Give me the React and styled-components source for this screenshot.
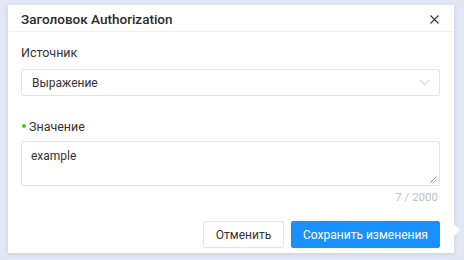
import React from "react";
import styled, { createGlobalStyle } from "styled-components";

const Global = createGlobalStyle`
  html, body { margin: 0; padding: 0; background: #e3e6f3; }
  body { font-family: Roboto, "Liberation Sans", sans-serif; color: #262626; }
  * { box-sizing: border-box; }
`;

const Page = styled.div`
  width: 464px;
  height: 260px;
  padding: 5px 10px 7px 8px;
  display: flex;
`;

const Card = styled.div`
  position: relative;
  flex: 1;
  background: #fff;
  box-shadow: 0 1px 4px rgba(80, 90, 140, 0.18);
  display: flex;
  flex-direction: column;
`;

const Arrow = styled.div`
  position: absolute;
  right: -6px;
  top: 219px;
  width: 0;
  height: 0;
  border-top: 6px solid transparent;
  border-bottom: 6px solid transparent;
  border-left: 6px solid #fff;
`;

const Header = styled.div`
  height: 27px;
  border-bottom: 1px solid #f0f0f0;
  display: flex;
  align-items: center;
  justify-content: space-between;
  padding: 0 15px 0 13px;
`;

const Title = styled.div`
  font-size: 13.5px;
  font-weight: 500;
  color: #2b2b2b;
  margin-top: 1px;
`;

const Close = styled.button`
  border: 0;
  background: none;
  padding: 0;
  width: 9px;
  height: 9px;
  display: flex;
  color: #333;
  margin-top: 2px;
`;

const Body = styled.div`
  padding: 12px 14px 0 13px;
  display: flex;
  flex-direction: column;
`;

const Label = styled.div`
  font-size: 12.5px;
  color: #333;
  height: 16px;
  display: flex;
  align-items: center;
  gap: 3px;
  margin-bottom: ${(p) => p.$mb}px;
`;

const Dot = styled.span`
  width: 4px;
  height: 4px;
  border-radius: 50%;
  background: #52c41a;
  margin-left: 1px;
`;

const Select = styled.div`
  height: 27px;
  border: 1px solid #e4e4e4;
  border-radius: 2px;
  display: flex;
  align-items: center;
  justify-content: space-between;
  padding-left: 10px;
  padding-right: 9px;
  font-size: 12px;
  color: #333;
  margin-bottom: 22px;
`;

const SelectValue = styled.span`
  display: block;
`;

const Textarea = styled.div`
  position: relative;
  height: 45px;
  border: 1px solid #e4e4e4;
  border-radius: 2px;
  padding: 7px 9px 7px 9px;
  font-size: 12px;
  color: #333;
`;

const Grip = styled.svg`
  position: absolute;
  right: 2px;
  bottom: 2px;
`;

const Counter = styled.div`
  text-align: right;
  font-size: 11.5px;
  color: #bfbfbf;
  padding-right: 2px;
  margin-top: 4px;
  height: 15px;
`;

const Footer = styled.div`
  display: flex;
  justify-content: flex-end;
  gap: 7px;
  margin-top: 16px;
`;

const Button = styled.button`
  height: 27px;
  padding: 0;
  border-radius: 2px;
  font-family: Roboto, "Liberation Sans", sans-serif;
  font-size: 12px;
  white-space: nowrap;
  border: 1px solid ${(p) => (p.$primary ? "#1890ff" : "#e4e4e4")};
  background: ${(p) => (p.$primary ? "#1890ff" : "#fff")};
  color: ${(p) => (p.$primary ? "#fff" : "#333")};
  width: ${(p) => p.$w}px;
`;

export default function App() {
  return (
    <>
      <Global />
      <Page>
        <Card>
          <Arrow />
          <Header>
            <Title>Заголовок Authorization</Title>
            <Close aria-label="close">
              <svg width="9" height="9" viewBox="0 0 9 9">
                <path d="M0.5 0.5 L8.5 8.5 M8.5 0.5 L0.5 8.5" stroke="#333" strokeWidth="1.1" />
              </svg>
            </Close>
          </Header>
          <Body>
            <Label $mb={9}>Источник</Label>
            <Select>
              <SelectValue>Выражение</SelectValue>
              <svg width="11" height="7" viewBox="0 0 11 7">
                <path d="M0.5 0.8 L5.5 5.8 L10.5 0.8" fill="none" stroke="#c4c4c4" strokeWidth="1" />
              </svg>
            </Select>
            <Label $mb={7}>
              <Dot />
              Значение
            </Label>
            <Textarea>
              example
              <Grip width="7" height="7" viewBox="0 0 7 7">
                <path d="M6.5 0.5 L0.5 6.5 M6.5 3.5 L3.5 6.5" stroke="#888" strokeWidth="0.9" />
              </Grip>
            </Textarea>
            <Counter>7 / 2000</Counter>
            <Footer>
              <Button $w={81}>Отменить</Button>
              <Button $primary $w={149}>Сохранить изменения</Button>
            </Footer>
          </Body>
        </Card>
      </Page>
    </>
  );
}
